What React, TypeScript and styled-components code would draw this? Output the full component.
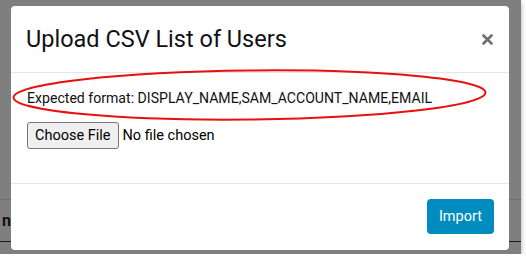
import styled, { createGlobalStyle } from "styled-components";

const GlobalStyle = createGlobalStyle`
  html, body {
    margin: 0;
    padding: 0;
    background: #ffffff;
    font-family: Roboto, "Liberation Sans", sans-serif;
  }
`;

const Backdrop = styled.div`
  position: relative;
  display: grid;
  width: 521px;
  height: 254px;
  background: #7f7f7f;
  box-shadow: 0 3px 5px rgba(0, 0, 0, 0.35);
  overflow: hidden;
`;

const Behind = styled.div`
  grid-area: 1 / 1;
  padding-top: 199px;
`;

const Rule = styled.div<{ $dark?: boolean }>`
  height: 1px;
  background: ${(p) => (p.$dark ? "#1a1a1a" : "#6e6e6e")};
`;

const BehindText = styled.div`
  height: 41px;
  padding-left: 2px;
  font-size: 16px;
  font-weight: 700;
  line-height: 41px;
  color: #111;
`;

const Modal = styled.div`
  grid-area: 1 / 1;
  align-self: start;
  margin: 6px 0 0 11px;
  width: 498px;
  height: 244px;
  display: flex;
  flex-direction: column;
  background: #ffffff;
  border-radius: 4px;
`;

const Header = styled.div`
  display: flex;
  align-items: center;
  justify-content: space-between;
  height: 66px;
  padding: 0 16px 0 15px;
  border-bottom: 1px solid #e5e5e5;
`;

const Title = styled.h4`
  margin: 0;
  font-size: 23.5px;
  font-weight: 400;
  color: #111;
`;

const Close = styled.button`
  border: 0;
  background: none;
  padding: 0;
  display: flex;
  color: #6f6f6f;
`;

const Body = styled.div`
  flex: 1;
  display: flex;
  flex-direction: column;
  gap: 15px;
  padding: 16px 16px 0 16px;
  border-bottom: 1px solid #e5e5e5;
`;

const Hint = styled.p`
  margin: 0;
  font-size: 14.1px;
  line-height: 18px;
  color: #111;
`;

const FileRow = styled.div`
  display: flex;
  align-items: center;
  gap: 4px;
  font-size: 14.5px;
  color: #000;
`;

const FileButton = styled.button`
  height: 27px;
  padding: 0 7px;
  font-family: inherit;
  font-size: 14.5px;
  color: #000;
  background: #efefef;
  border: 1px solid #767676;
  border-radius: 3px;
`;

const Footer = styled.div`
  display: flex;
  justify-content: flex-end;
  height: 66px;
  box-sizing: border-box;
  padding: 15px 15px 0 0;
`;

const ImportButton = styled.button`
  height: 35px;
  padding: 0 12px;
  font-family: inherit;
  font-size: 14.5px;
  color: #ffffff;
  background: #008cbf;
  border: 0;
  border-radius: 4px;
`;

const Ellipse = styled.svg`
  position: absolute;
  left: 0;
  top: 0;
  pointer-events: none;
`;

export default function App() {
  return (
    <>
      <GlobalStyle />
      <Backdrop>
        <Behind>
          <Rule />
          <BehindText>n</BehindText>
          <Rule $dark />
        </Behind>
        <Modal>
          <Header>
            <Title>Upload CSV List of Users</Title>
            <Close aria-label="Close">
              <svg width="11" height="11" viewBox="0 0 11 11">
                <path
                  d="M1.5 1.5 L9.5 9.5 M9.5 1.5 L1.5 9.5"
                  stroke="currentColor"
                  strokeWidth="2.6"
                  strokeLinecap="round"
                />
              </svg>
            </Close>
          </Header>
          <Body>
            <Hint>Expected format: DISPLAY_NAME,SAM_ACCOUNT_NAME,EMAIL</Hint>
            <FileRow>
              <FileButton>Choose File</FileButton>
              <span>No file chosen</span>
            </FileRow>
          </Body>
          <Footer>
            <ImportButton>Import</ImportButton>
          </Footer>
        </Modal>
        <Ellipse width="521" height="254" viewBox="0 0 521 254">
          <ellipse
            cx="249.5"
            cy="95"
            rx="236"
            ry="24.5"
            transform="rotate(-0.6 249.5 95)"
            fill="none"
            stroke="#e8100f"
            strokeWidth="2"
          />
        </Ellipse>
      </Backdrop>
    </>
  );
}
